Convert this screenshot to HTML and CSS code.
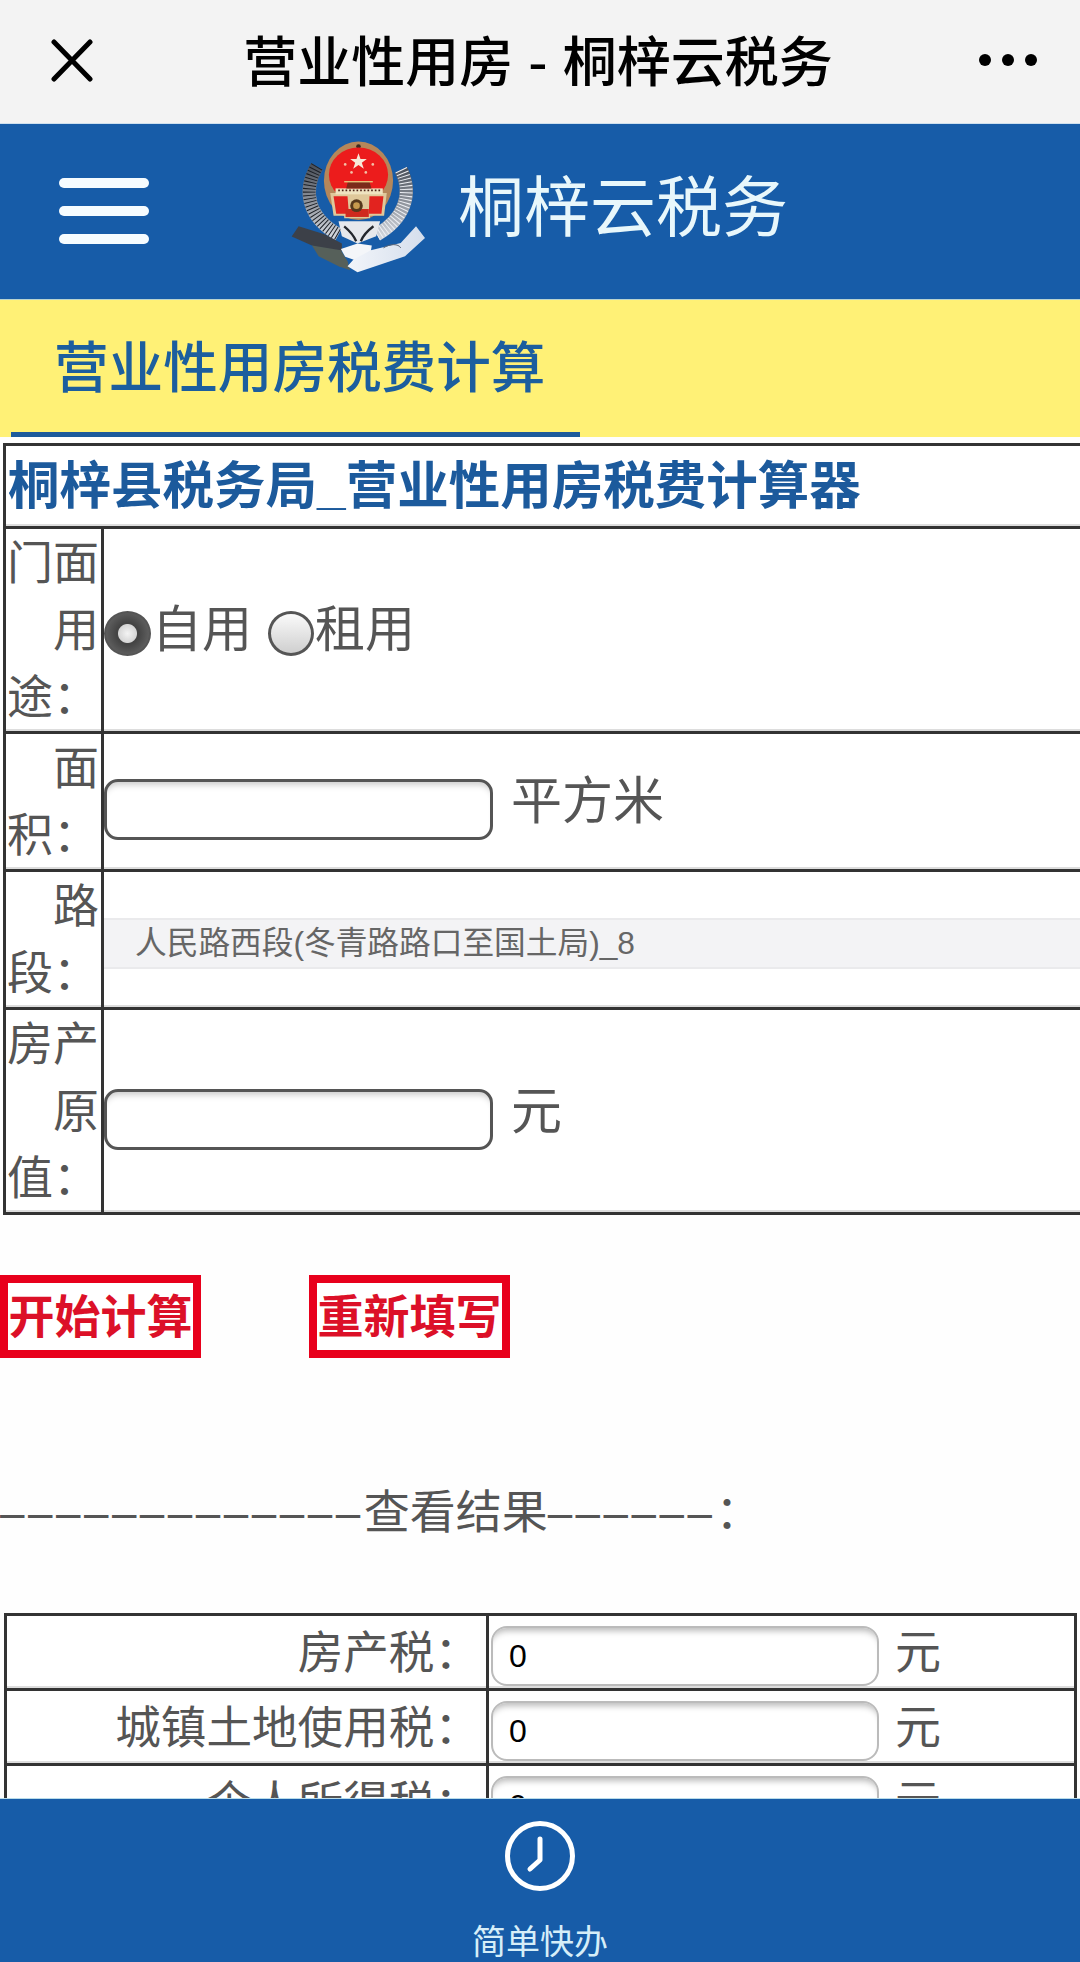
FILE: index.html
```html
<!DOCTYPE html>
<html lang="zh-CN">
<head>
<meta charset="utf-8">
<title>营业性用房 - 桐梓云税务</title>
<link rel="stylesheet" href="styles.css">
</head>
<body>
<div class="page">
  <div class="titlebar">
    <svg class="close" viewBox="0 0 42 43"><path d="M3 3 L39 40 M39 3 L3 40" fill="none" stroke="#000" stroke-width="5" stroke-linecap="round"/></svg>
    <div class="titlebar-text">营业性用房 - 桐梓云税务</div>
    <div class="dots"><i></i><i></i><i></i></div>
  </div>
  <header class="brand">
    <div class="burger"><i></i><i></i><i></i></div>
    <svg class="emblem" viewBox="62 55 403 405">
      <defs>
        <linearGradient id="silver" x1="0" y1="0" x2="0" y2="1"><stop offset="0" stop-color="#4c525c"/><stop offset="1" stop-color="#cfd3da"/></linearGradient>
        <linearGradient id="rib" x1="0" y1="0" x2="1" y2="0"><stop offset="0" stop-color="#f2f5fa"/><stop offset="1" stop-color="#d5deec"/></linearGradient>
      </defs>
      <path d="M140 140 C95 215 115 295 205 345" fill="none" stroke="url(#silver)" stroke-width="40"/>
      <path d="M140 140 C95 215 115 295 205 345" fill="none" stroke="#1c2027" stroke-width="38" stroke-dasharray="3 7"/>
      <path d="M393 150 C430 225 400 300 320 345" fill="none" stroke="url(#silver)" stroke-width="40"/>
      <path d="M393 150 C430 225 400 300 320 345" fill="none" stroke="#eef0f5" stroke-width="38" stroke-dasharray="3 7"/>
      <path d="M205 305 H330 L318 350 L262 372 L215 350 Z" fill="#e6e8ec"/>
      <path d="M222 320 C240 335 250 345 258 365 M310 320 C290 335 280 345 272 365" fill="none" stroke="#23262c" stroke-width="7"/>
      <ellipse cx="265" cy="183" rx="104" ry="118" fill="#b5875a"/>
      <circle cx="265" cy="80" r="7" fill="#3b2a20"/>
      <ellipse cx="265" cy="165" rx="89" ry="82" fill="#ec1c1c"/>
      <path d="M180 220 H350 L342 288 H300 V296 H222 V288 H190 Z" fill="#dfc89a"/>
      <path d="M190 230 H232 L236 282 H198 Z M298 230 H340 L334 282 H296 Z" fill="#e2231f"/>
      <path d="M226 268 H296 V292 H226 Z" fill="#cf2a1e"/>
      <rect x="196" y="206" width="142" height="18" fill="#efe3c0"/>
      <path d="M204 212 H330" stroke="#4a2218" stroke-width="5" stroke-dasharray="5 6"/>
      <path d="M228 206 L233 186 L298 186 L304 206 Z" fill="#7b2a1a"/>
      <path d="M222 186 H308" stroke="#e8c87e" stroke-width="4"/>
      <path d="M265 100 L271 118 L290 118 L275 129 L281 147 L265 136 L249 147 L255 129 L240 118 L259 118 Z" fill="#f7e9d8"/>
      <g fill="#f3c0a6"><circle cx="225" cy="134" r="4"/><circle cx="308" cy="134" r="4"/><circle cx="244" cy="158" r="4"/><circle cx="287" cy="158" r="4"/></g>
      <circle cx="259" cy="258" r="19" fill="#56381c"/>
      <circle cx="259" cy="258" r="10" fill="#c79a4e"/>
      <path d="M64 351 L85 320 L165 345 L215 372 L215 395 L130 380 Z" fill="#3c4048"/>
      <path d="M125 378 L212 392 L232 425 L240 452 L205 440 L145 410 Z" fill="#56605a"/>
      <path d="M212 388 L262 372 L305 378 L300 408 L255 422 L225 412 Z" fill="#f4f6f9"/>
      <path d="M302 392 L392 370 L438 320 L465 355 L405 410 L262 458 L232 440 L250 420 Z" fill="url(#rib)"/>
      <path d="M340 385 C360 372 385 372 392 385" fill="none" stroke="#5a6270" stroke-width="3"/>
    </svg>
    <div class="brand-name">桐梓云税务</div>
  </header>
  <section class="tabs">
    <div class="tab">营业性用房税费计算</div>
  </section>
  <table class="calc">
    <colgroup><col class="calc-col-label"><col></colgroup>
    <tr><td colspan="2" class="calc-title">桐梓县税务局_营业性用房税费计算器</td></tr>
    <tr>
      <td class="label">门面用途：</td>
      <td class="value">
        <div class="choice">
          <input class="radio" type="radio" name="use" checked><span class="choice-text">自用</span>
          <input class="radio radio-off" type="radio" name="use"><span class="choice-text">租用</span>
        </div>
      </td>
    </tr>
    <tr>
      <td class="label">面积：</td>
      <td class="value"><div class="field"><input class="box" type="text"><span class="unit">平方米</span></div></td>
    </tr>
    <tr>
      <td class="label">路段：</td>
      <td class="value"><div class="select">人民路西段(冬青路路口至国土局)_8</div></td>
    </tr>
    <tr>
      <td class="label">房产原值：</td>
      <td class="value"><div class="field"><input class="box" type="text"><span class="unit">元</span></div></td>
    </tr>
  </table>
  <div class="actions">
    <button class="btn" type="button">开始计算</button>
    <button class="btn" type="button">重新填写</button>
  </div>
  <div class="result-head"><span class="dash">–––––––––––––</span>查看结果<span class="dash">––––––</span>：</div>
  <table class="result">
    <tr>
      <td class="r-label">房产税：</td>
      <td class="r-value"><div class="r-field"><input class="r-box" type="text" value="0"><span class="r-unit">元</span></div></td>
    </tr>
    <tr>
      <td class="r-label">城镇土地使用税：</td>
      <td class="r-value"><div class="r-field"><input class="r-box" type="text" value="0"><span class="r-unit">元</span></div></td>
    </tr>
    <tr>
      <td class="r-label">个人所得税：</td>
      <td class="r-value"><div class="r-field"><input class="r-box" type="text" value="0"><span class="r-unit">元</span></div></td>
    </tr>
  </table>
  <nav class="bottom">
    <svg class="clock" viewBox="0 0 70 70"><circle cx="35" cy="35" r="32.5" fill="none" stroke="#fff" stroke-width="5"/><path d="M35 18 V39 L25 48" fill="none" stroke="#fff" stroke-width="5" stroke-linecap="round" stroke-linejoin="round"/></svg>
    <div class="bottom-label">简单快办</div>
  </nav>
</div>
</body>
</html>
```
FILE: styles.css
```css
* { box-sizing: border-box; }
html, body { margin: 0; padding: 0; background: #fff; }
.page {
  position: relative;
  width: 1080px;
  height: 1962px;
  overflow: hidden;
  background: #fefefe;
  color: #555;
  font-family: "Liberation Sans", "Noto Sans CJK SC", sans-serif;
}
.titlebar {
  display: flex;
  align-items: center;
  height: 124px;
  padding: 0 43px 0 51px;
  background: #f3f3f3;
  border-bottom: 1px solid #cfe0ee;
}
.close { width: 42px; height: 43px; flex: none; margin-bottom: 3px; }
.titlebar-text {
  flex: 1;
  margin-bottom: 6px;
  padding-left: 4px;
  text-align: center;
  color: #000;
  font-family: "Noto Sans CJK SC", sans-serif;
  font-size: 54px;
  font-weight: 500;
  word-spacing: 3px;
  line-height: 70px;
  white-space: nowrap;
}
.dots { display: flex; gap: 11px; flex: none; margin-bottom: 3px; }
.dots i { width: 12px; height: 12px; border-radius: 50%; background: #000; }
.brand {
  display: flex;
  align-items: center;
  height: 176px;
  padding-left: 59px;
  background: #175ca8;
  border-bottom: 1px solid #b9d3cf;
}
.burger { display: flex; flex-direction: column; gap: 18px; flex: none; width: 90px; margin-bottom: 2px; }
.burger i { height: 10px; border-radius: 5px; background: #f6fcff; }
.emblem { width: 134px; height: 135px; margin: 0 0 12px 142px; flex: none; }
.brand-name {
  margin: 0 0 8px 33px;
  color: #e8f7fb;
  font-size: 66px;
  line-height: 80px;
  white-space: nowrap;
}
.tabs {
  height: 137px;
  background: #fff176;
}
.tab {
  width: 569px;
  height: 137px;
  margin-left: 11px;
  padding: 29px 0 0 43px;
  border-bottom: 5px solid #1c5a9c;
  color: #1c5e9e;
  font-size: 54.6px;
  font-weight: 500;
  line-height: 80px;
  white-space: nowrap;
}
.calc, .result {
  border-collapse: collapse;
  table-layout: fixed;
  background: #fff;
}
.calc { width: 1080px; margin: 6px 0 0 3px; }
.calc-col-label { width: 98px; }
.calc td, .result td {
  border: 3px solid #333;
  padding: 0;
  box-shadow: inset 0 -2px 0 #ddd;
}
.calc-title {
  height: 83px;
  padding-left: 2px !important;
  color: #1c5a9c;
  font-size: 51.5px;
  font-weight: 700;
  line-height: 60px;
  white-space: nowrap;
}
.label {
  padding: 1px 2px 0 0 !important;
  font-size: 46px;
  line-height: 67px;
  text-align: right;
  word-break: break-all;
}
.value { padding-left: 0 !important; }
.choice { display: flex; align-items: center; }
.radio {
  appearance: none;
  -webkit-appearance: none;
  width: 47px;
  height: 45px;
  margin: 6px 0 0 0;
  flex: none;
  border-radius: 50%;
  background: radial-gradient(circle at 50% 50%, #f4f4f4 0, #d5d5d5 9px, #444 10px, #444 11px, #5f5f5f 22px);
  border: 2px solid #555;
}
.radio-off {
  margin-left: 16px;
  background: linear-gradient(#fafafa, #cfcfcf);
  border: 3px solid #555;
  width: 46px;
}
.choice-text { margin-left: 1px; font-size: 50px; line-height: 67px; white-space: nowrap; }
.field { display: flex; align-items: center; }
.box {
  width: 389px;
  height: 61px;
  margin: 16px 18px 0 0;
  padding: 0;
  flex: none;
  background: #fff;
  border: 3px solid #555;
  border-radius: 14px;
  box-shadow: inset 0 8px 6px -5px #ccc;
}
.unit { font-size: 51px; line-height: 67px; white-space: nowrap; }
.select {
  height: 51px;
  margin-top: 7px;
  padding-left: 31px;
  background: #f3f3f5;
  border-top: 2px solid #eaeaec;
  border-bottom: 2px solid #eaeaec;
  color: #666;
  font-size: 31.7px;
  line-height: 47px;
  white-space: nowrap;
}
.actions { display: flex; gap: 108px; margin-top: 60px; }
.btn {
  width: 201px;
  height: 83px;
  padding: 0;
  background: #fff;
  border: 8px solid #e8001c;
  color: #dc1028;
  font-family: inherit;
  font-size: 46px;
  font-weight: 700;
  line-height: 60px;
  white-space: nowrap;
}
.result-head {
  margin-top: 121px;
  font-size: 46px;
  line-height: 67px;
  white-space: nowrap;
}
.dash { font-family: "Liberation Sans", sans-serif; font-size: 44px; letter-spacing: 3.5px; }
.result { width: 1073px; margin: 67px 0 0 4px; }
.result td { height: 75px; }
.r-label {
  width: 482px;
  padding: 4px 6px 0 0 !important;
  font-size: 45.6px;
  line-height: 60px;
  text-align: right;
  white-space: nowrap;
}
.r-field { display: flex; align-items: center; padding-left: 2px; }
.r-box {
  width: 388px;
  height: 60px;
  margin: 8px 16px 0 0;
  padding: 0 0 0 16px;
  flex: none;
  background: #fff;
  border: 2px solid #bbb;
  border-radius: 16px;
  box-shadow: inset 0 8px 6px -5px #bbb;
  color: #000;
  font-family: "Liberation Sans", sans-serif;
  font-size: 32px;
}
.r-unit { font-size: 46px; line-height: 60px; }
.bottom {
  position: absolute;
  left: 0;
  right: 0;
  bottom: 0;
  height: 164px;
  display: flex;
  flex-direction: column;
  align-items: center;
  padding-top: 22px;
  background: #175ca8;
  border-top: 1px solid #b9dcea;
}
.clock { width: 70px; height: 70px; flex: none; }
.bottom-label {
  margin-top: 31px;
  color: #d6eef8;
  font-size: 34px;
  line-height: 40px;
  white-space: nowrap;
}
```
